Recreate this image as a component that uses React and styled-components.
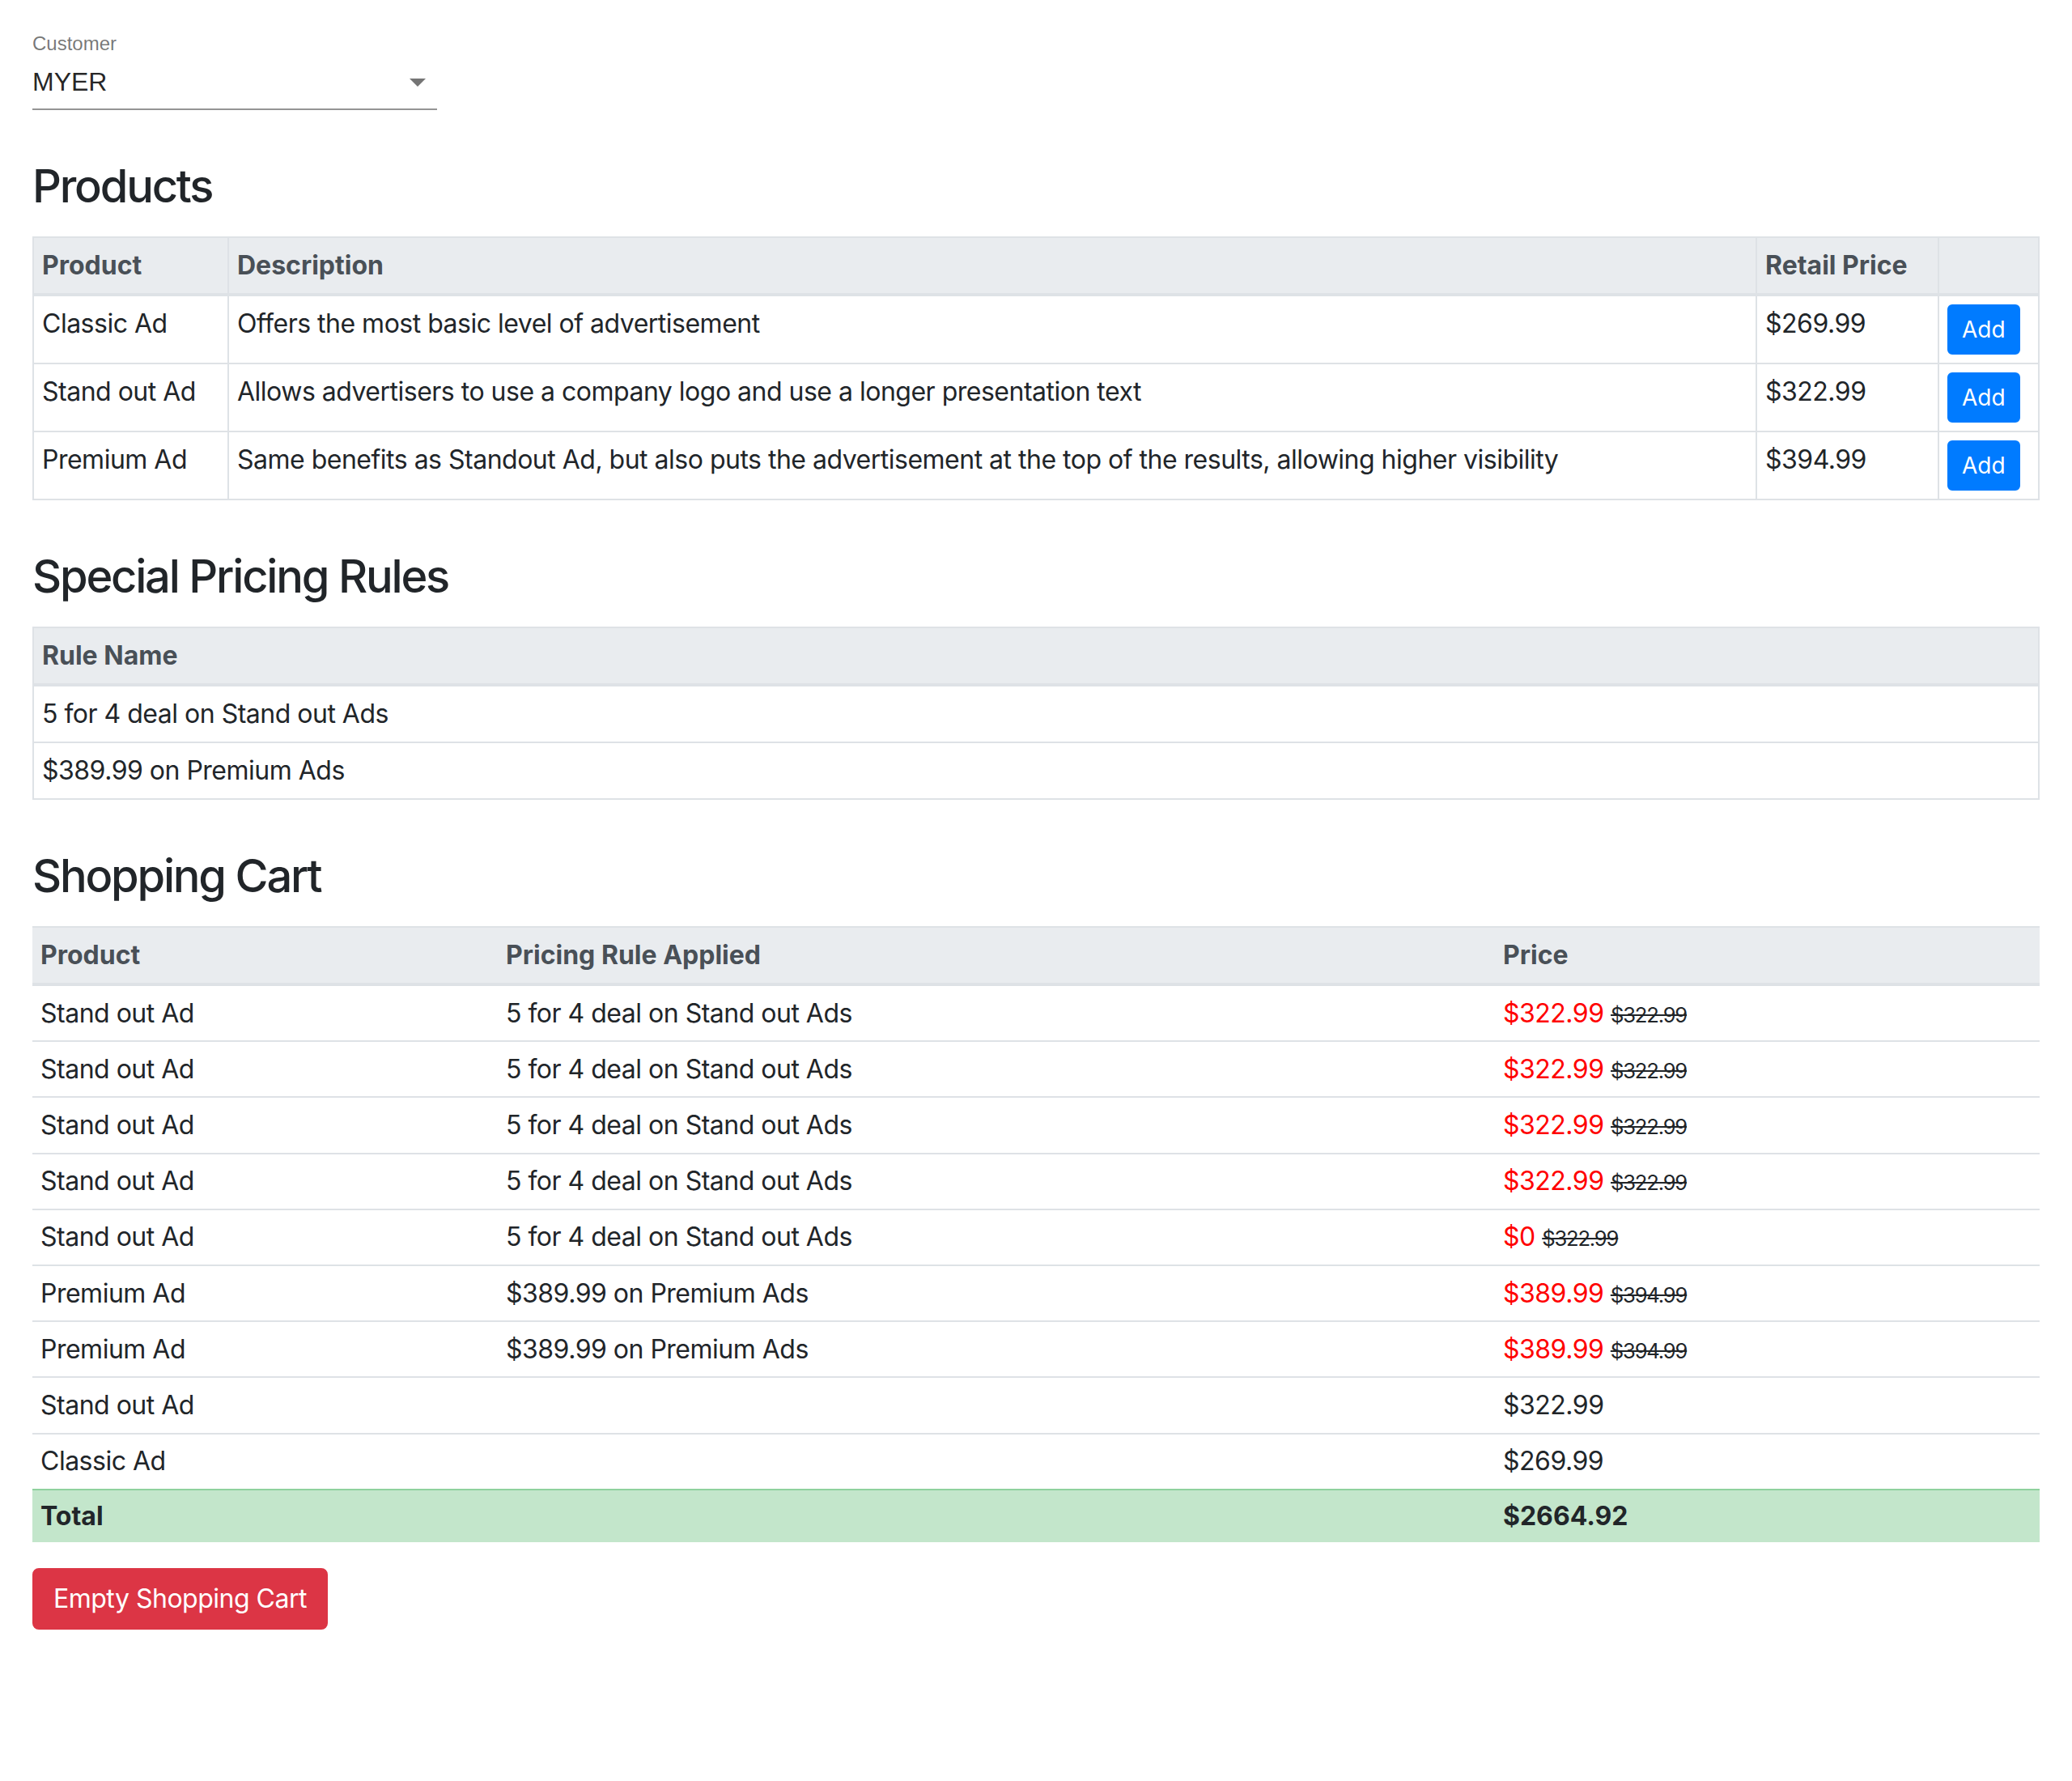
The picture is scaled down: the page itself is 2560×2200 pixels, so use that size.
import React from "react";
import styled, { createGlobalStyle, css } from "styled-components";

const products = [
  { name: "Classic Ad", description: "Offers the most basic level of advertisement", price: "$269.99" },
  { name: "Stand out Ad", description: "Allows advertisers to use a company logo and use a longer presentation text", price: "$322.99" },
  {
    name: "Premium Ad",
    description:
      "Same benefits as Standout Ad, but also puts the advertisement at the top of the results, allowing higher visibility",
    price: "$394.99",
  },
];

const rules = ["5 for 4 deal on Stand out Ads", "$389.99 on Premium Ads"];

const standOutDeal = "5 for 4 deal on Stand out Ads";
const premiumDeal = "$389.99 on Premium Ads";

const cart = [
  { product: "Stand out Ad", rule: standOutDeal, price: "$322.99", retail: "$322.99" },
  { product: "Stand out Ad", rule: standOutDeal, price: "$322.99", retail: "$322.99" },
  { product: "Stand out Ad", rule: standOutDeal, price: "$322.99", retail: "$322.99" },
  { product: "Stand out Ad", rule: standOutDeal, price: "$322.99", retail: "$322.99" },
  { product: "Stand out Ad", rule: standOutDeal, price: "$0", retail: "$322.99" },
  { product: "Premium Ad", rule: premiumDeal, price: "$389.99", retail: "$394.99" },
  { product: "Premium Ad", rule: premiumDeal, price: "$389.99", retail: "$394.99" },
  { product: "Stand out Ad", rule: "", price: "$322.99" },
  { product: "Classic Ad", rule: "", price: "$269.99" },
];

const GlobalStyle = createGlobalStyle`
  body {
    margin: 0;
    background: #fff;
    color: #212529;
    font-family: Inter, "Noto Sans", sans-serif;
  }
`;

function App() {
  return (
    <>
      <GlobalStyle />
      <Page>
        <CustomerField>
          <FieldLabel>Customer</FieldLabel>
          <SelectBox>
            <SelectValue>MYER</SelectValue>
            <ArrowIcon viewBox="0 0 24 24">
              <path d="M7 10l5 5 5-5z" />
            </ArrowIcon>
          </SelectBox>
        </CustomerField>

        <Section>
          <Heading>Products</Heading>
          <Table $bordered>
            <thead>
              <tr>
                <HeadCell $bordered $width={241}>Product</HeadCell>
                <HeadCell $bordered>Description</HeadCell>
                <HeadCell $bordered $width={225}>Retail Price</HeadCell>
                <HeadCell $bordered $width={124}></HeadCell>
              </tr>
            </thead>
            <tbody>
              {products.map((p) => (
                <tr key={p.name}>
                  <Cell $bordered>{p.name}</Cell>
                  <Cell $bordered>{p.description}</Cell>
                  <Cell $bordered>{p.price}</Cell>
                  <Cell $bordered>
                    <AddButton>Add</AddButton>
                  </Cell>
                </tr>
              ))}
            </tbody>
          </Table>
        </Section>

        <Section>
          <Heading>Special Pricing Rules</Heading>
          <Table $bordered>
            <thead>
              <tr>
                <HeadCell $bordered>Rule Name</HeadCell>
              </tr>
            </thead>
            <tbody>
              {rules.map((r) => (
                <tr key={r}>
                  <Cell $bordered>{r}</Cell>
                </tr>
              ))}
            </tbody>
          </Table>
        </Section>

        <Section>
          <Heading>Shopping Cart</Heading>
          <Table>
            <thead>
              <tr>
                <HeadCell $width={575}>Product</HeadCell>
                <HeadCell $width={1232}>Pricing Rule Applied</HeadCell>
                <HeadCell>Price</HeadCell>
              </tr>
            </thead>
            <tbody>
              {cart.map((item, i) => (
                <tr key={i}>
                  <Cell>{item.product}</Cell>
                  <Cell>{item.rule}</Cell>
                  <Cell>
                    {item.retail ? (
                      <>
                        <SalePrice>{item.price}</SalePrice> <OldPrice>{item.retail}</OldPrice>
                      </>
                    ) : (
                      item.price
                    )}
                  </Cell>
                </tr>
              ))}
              <tr>
                <Cell $total>Total</Cell>
                <Cell $total></Cell>
                <Cell $total>$2664.92</Cell>
              </tr>
            </tbody>
          </Table>
          <DangerButton>Empty Shopping Cart</DangerButton>
        </Section>
      </Page>
    </>
  );
}

export default App;

const Page = styled.div`
  display: flex;
  flex-direction: column;
  gap: 61px;
  padding: 42px 40px 80px;
`;

// MUI style select, drawn at 2x
const CustomerField = styled.div`
  width: 500px;
  font-family: "Liberation Sans", Arial, sans-serif;
`;

const FieldLabel = styled.div`
  font-size: 24px;
  line-height: 24px;
  color: rgba(0, 0, 0, 0.54);
`;

const SelectBox = styled.div`
  display: flex;
  align-items: center;
  padding: 16px 0 14px;
  border-bottom: 2px solid #949494;
`;

const SelectValue = styled.div`
  flex: 1;
  font-size: 32px;
  line-height: 38px;
  color: rgba(0, 0, 0, 0.87);
`;

const ArrowIcon = styled.svg`
  width: 48px;
  height: 48px;
  margin: -5px 0;
  flex: none;
  fill: #757575;
`;

const Section = styled.section`
  display: flex;
  flex-direction: column;
  align-items: stretch;
`;

const Heading = styled.h3`
  margin: 0 0 28px;
  font-size: 56px;
  line-height: 67px;
  font-weight: 500;
  letter-spacing: -2.2px;
  color: #212529;
`;

const Table = styled.table`
  width: 100%;
  border-collapse: collapse;
  table-layout: fixed;
  font-size: 32px;
  line-height: 48px;
  letter-spacing: -0.5px;
  color: #212529;
  ${({ $bordered }) =>
    $bordered &&
    css`
      border: 2px solid #dee2e6;
    `}
`;

const HeadCell = styled.th`
  box-sizing: border-box;
  width: ${({ $width }) => ($width ? `${$width}px` : "auto")};
  padding: 10px;
  text-align: left;
  vertical-align: bottom;
  font-weight: 700;
  letter-spacing: normal;
  color: #495057;
  background: #e9ecef;
  border-top: 2px solid #dee2e6;
  border-bottom: 4px solid #dee2e6;
  ${({ $bordered }) =>
    $bordered &&
    css`
      border-left: 2px solid #dee2e6;
      border-right: 2px solid #dee2e6;
    `}
`;

const Cell = styled.td`
  box-sizing: border-box;
  padding: 9.6px 10px;
  vertical-align: top;
  border-top: 2px solid #dee2e6;
  ${({ $bordered }) =>
    $bordered &&
    css`
      padding: 10px;
      border: 2px solid #dee2e6;
    `}
  ${({ $total }) =>
    $total &&
    css`
      padding: 8px 10px;
      font-weight: 700;
      letter-spacing: normal;
      background: #c3e6cb;
      border-top: 2px solid #8fd19e;
    `}
`;

const SalePrice = styled.span`
  color: red;
`;

const OldPrice = styled.s`
  font-size: 80%;
  line-height: 1;
  letter-spacing: -1.2px;
  color: #212529;
`;

const AddButton = styled.button`
  display: inline-block;
  padding: 8px 16px;
  font-family: inherit;
  font-size: 28px;
  line-height: 42px;
  color: #fff;
  background: #007bff;
  border: 2px solid #007bff;
  border-radius: 6px;
  cursor: pointer;
`;

const DangerButton = styled.button`
  align-self: flex-start;
  margin-top: 32px;
  padding: 12px 24px;
  font-family: inherit;
  font-size: 32px;
  line-height: 48px;
  letter-spacing: -0.5px;
  color: #fff;
  background: #dc3545;
  border: 2px solid #dc3545;
  border-radius: 8px;
  cursor: pointer;
`;
